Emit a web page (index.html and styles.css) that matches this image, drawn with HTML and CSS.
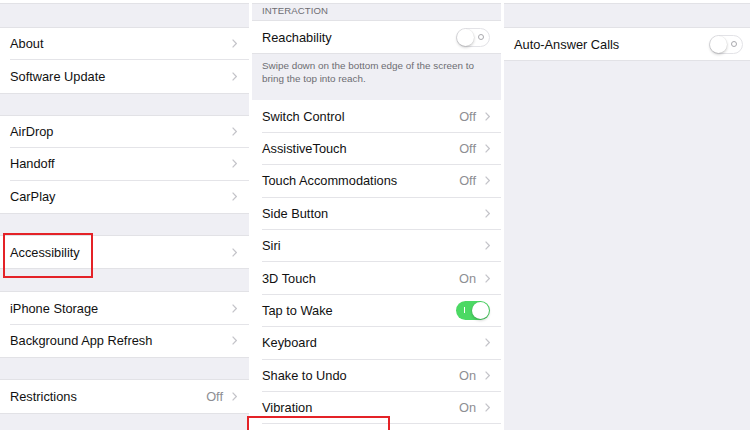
FILE: index.html
```html
<!DOCTYPE html>
<html>
<head>
<meta charset="utf-8">
<link rel="stylesheet" href="styles.css">
</head>
<body>
<div class="screen">
  <div class="col col1">
    <div class="strip"></div>
    <div class="group first">
      <div class="row"><div class="inner"><span class="label">About</span><span class="chev"><svg width="5" height="9" viewBox="0 0 5 9"><polyline points="0.6,0.6 4.3,4.5 0.6,8.4" fill="none" stroke="#c4c4c9" stroke-width="1.2"/></svg></span></div></div>
      <div class="row"><div class="inner"><span class="label">Software Update</span><span class="chev"><svg width="5" height="9" viewBox="0 0 5 9"><polyline points="0.6,0.6 4.3,4.5 0.6,8.4" fill="none" stroke="#c4c4c9" stroke-width="1.2"/></svg></span></div></div>
    </div>
    <div class="group">
      <div class="row"><div class="inner"><span class="label">AirDrop</span><span class="chev"><svg width="5" height="9" viewBox="0 0 5 9"><polyline points="0.6,0.6 4.3,4.5 0.6,8.4" fill="none" stroke="#c4c4c9" stroke-width="1.2"/></svg></span></div></div>
      <div class="row"><div class="inner"><span class="label">Handoff</span><span class="chev"><svg width="5" height="9" viewBox="0 0 5 9"><polyline points="0.6,0.6 4.3,4.5 0.6,8.4" fill="none" stroke="#c4c4c9" stroke-width="1.2"/></svg></span></div></div>
      <div class="row"><div class="inner"><span class="label">CarPlay</span><span class="chev"><svg width="5" height="9" viewBox="0 0 5 9"><polyline points="0.6,0.6 4.3,4.5 0.6,8.4" fill="none" stroke="#c4c4c9" stroke-width="1.2"/></svg></span></div></div>
    </div>
    <div class="group">
      <div class="row"><div class="inner"><span class="label">Accessibility</span><span class="chev"><svg width="5" height="9" viewBox="0 0 5 9"><polyline points="0.6,0.6 4.3,4.5 0.6,8.4" fill="none" stroke="#c4c4c9" stroke-width="1.2"/></svg></span></div></div>
    </div>
    <div class="group g24">
      <div class="row"><div class="inner"><span class="label">iPhone Storage</span><span class="chev"><svg width="5" height="9" viewBox="0 0 5 9"><polyline points="0.6,0.6 4.3,4.5 0.6,8.4" fill="none" stroke="#c4c4c9" stroke-width="1.2"/></svg></span></div></div>
      <div class="row"><div class="inner"><span class="label">Background App Refresh</span><span class="chev"><svg width="5" height="9" viewBox="0 0 5 9"><polyline points="0.6,0.6 4.3,4.5 0.6,8.4" fill="none" stroke="#c4c4c9" stroke-width="1.2"/></svg></span></div></div>
    </div>
    <div class="group">
      <div class="row"><div class="inner"><span class="label">Restrictions</span><span class="value">Off</span><span class="chev"><svg width="5" height="9" viewBox="0 0 5 9"><polyline points="0.6,0.6 4.3,4.5 0.6,8.4" fill="none" stroke="#c4c4c9" stroke-width="1.2"/></svg></span></div></div>
    </div>
  </div>

  <div class="col col2">
    <div class="strip"></div>
    <div class="header">INTERACTION</div>
    <div class="group flush">
      <div class="row"><div class="inner"><span class="label">Reachability</span><span class="toggle off"><span class="knob"></span><span class="ring"></span></span></div></div>
    </div>
    <div class="footer">Swipe down on the bottom edge of the screen to bring the top into reach.</div>
    <div class="group flush">
      <div class="row"><div class="inner"><span class="label">Switch Control</span><span class="value">Off</span><span class="chev"><svg width="5" height="9" viewBox="0 0 5 9"><polyline points="0.6,0.6 4.3,4.5 0.6,8.4" fill="none" stroke="#c4c4c9" stroke-width="1.2"/></svg></span></div></div>
      <div class="row"><div class="inner"><span class="label">AssistiveTouch</span><span class="value">Off</span><span class="chev"><svg width="5" height="9" viewBox="0 0 5 9"><polyline points="0.6,0.6 4.3,4.5 0.6,8.4" fill="none" stroke="#c4c4c9" stroke-width="1.2"/></svg></span></div></div>
      <div class="row"><div class="inner"><span class="label">Touch Accommodations</span><span class="value">Off</span><span class="chev"><svg width="5" height="9" viewBox="0 0 5 9"><polyline points="0.6,0.6 4.3,4.5 0.6,8.4" fill="none" stroke="#c4c4c9" stroke-width="1.2"/></svg></span></div></div>
      <div class="row"><div class="inner"><span class="label">Side Button</span><span class="chev"><svg width="5" height="9" viewBox="0 0 5 9"><polyline points="0.6,0.6 4.3,4.5 0.6,8.4" fill="none" stroke="#c4c4c9" stroke-width="1.2"/></svg></span></div></div>
      <div class="row"><div class="inner"><span class="label">Siri</span><span class="chev"><svg width="5" height="9" viewBox="0 0 5 9"><polyline points="0.6,0.6 4.3,4.5 0.6,8.4" fill="none" stroke="#c4c4c9" stroke-width="1.2"/></svg></span></div></div>
      <div class="row"><div class="inner"><span class="label">3D Touch</span><span class="value">On</span><span class="chev"><svg width="5" height="9" viewBox="0 0 5 9"><polyline points="0.6,0.6 4.3,4.5 0.6,8.4" fill="none" stroke="#c4c4c9" stroke-width="1.2"/></svg></span></div></div>
      <div class="row"><div class="inner"><span class="label">Tap to Wake</span><span class="toggle on"><span class="bar"></span><span class="knob"></span></span></div></div>
      <div class="row"><div class="inner"><span class="label">Keyboard</span><span class="chev"><svg width="5" height="9" viewBox="0 0 5 9"><polyline points="0.6,0.6 4.3,4.5 0.6,8.4" fill="none" stroke="#c4c4c9" stroke-width="1.2"/></svg></span></div></div>
      <div class="row"><div class="inner"><span class="label">Shake to Undo</span><span class="value">On</span><span class="chev"><svg width="5" height="9" viewBox="0 0 5 9"><polyline points="0.6,0.6 4.3,4.5 0.6,8.4" fill="none" stroke="#c4c4c9" stroke-width="1.2"/></svg></span></div></div>
      <div class="row"><div class="inner"><span class="label">Vibration</span><span class="value">On</span><span class="chev"><svg width="5" height="9" viewBox="0 0 5 9"><polyline points="0.6,0.6 4.3,4.5 0.6,8.4" fill="none" stroke="#c4c4c9" stroke-width="1.2"/></svg></span></div></div>
      <div class="row"><div class="inner"></div></div>
    </div>
  </div>

  <div class="col col3">
    <div class="strip"></div>
    <div class="group first">
      <div class="row"><div class="inner"><span class="label">Auto-Answer Calls</span><span class="toggle off"><span class="knob"></span><span class="ring"></span></span></div></div>
    </div>
  </div>

  <div class="mark mark-acc"></div>
  <div class="mark mark-call"></div>
</div>
</body>
</html>
```

FILE: styles.css
```css
html, body {
  margin: 0;
  padding: 0;
  background: #ffffff;
}

.screen {
  position: relative;
  width: 750px;
  height: 430px;
  overflow: hidden;
  display: flex;
  gap: 3px;
  background: #ffffff;
  font-family: "Liberation Sans", Arial, sans-serif;
  color: #111111;
}

.col {
  background: #efeff4;
  display: flex;
  flex-direction: column;
  overflow: hidden;
}

.col1 { width: 249px; }
.col2 { width: 249px; }
.col3 { flex: 1; }

.strip {
  height: 4px;
  flex: none;
  background: #ffffff;
  border-bottom: 1px solid #e2e2e6;
  box-sizing: border-box;
}

.group {
  flex: none;
  background: #ffffff;
  margin-top: 23px;
  box-shadow: 0 -1px 0 #e2e2e6, 0 1px 0 #e2e2e6;
}

.group.first { margin-top: 24px; }
.group.g24 { margin-top: 24px; }
.group.flush { margin-top: 0; box-shadow: 0 1px 0 #e2e2e6; }

.row {
  height: 32.4px;
  padding-left: 10px;
  box-sizing: border-box;
  display: flex;
}

.inner {
  flex: 1;
  display: flex;
  align-items: center;
  padding-right: 12px;
  box-sizing: border-box;
}

.row:not(:last-child) .inner {
  border-bottom: 1px solid #e4e4e8;
}

.col2 .inner { padding-right: 11px; }
.col3 .inner { padding-right: 7px; }

.label {
  flex: 1;
  font-size: 12.8px;
  white-space: nowrap;
}

.value {
  font-size: 12.8px;
  color: #8e8e93;
  margin-right: 9px;
}

.chev {
  display: flex;
  width: 5px;
  height: 9px;
}

.header {
  height: 17px;
  flex: none;
  padding-left: 10px;
  padding-top: 1px;
  box-sizing: border-box;
  font-size: 9.6px;
  color: #6d6d72;
  letter-spacing: 0.1px;
  border-bottom: 1px solid #e2e2e6;
}

.footer {
  height: 47px;
  flex: none;
  padding: 6px 16px 0 10px;
  box-sizing: border-box;
  font-size: 9.9px;
  line-height: 13px;
  color: #6d6d72;
}

.toggle {
  position: relative;
  width: 34px;
  height: 19px;
  border-radius: 10px;
  box-sizing: border-box;
  flex: none;
}

.toggle.off {
  background: #ffffff;
  border: 1px solid #e3e3e7;
}

.toggle.on {
  background: #4cd964;
}

.toggle .knob {
  position: absolute;
  top: 0;
  width: 17px;
  height: 17px;
  border-radius: 50%;
  background: #ffffff;
  box-shadow: 0 1.5px 3px rgba(0, 0, 0, 0.22), 0 0 0 0.5px rgba(0, 0, 0, 0.06);
}

.toggle.off .knob { left: 0; }
.toggle.on .knob { right: 1px; top: 1px; }

.toggle .ring {
  position: absolute;
  right: 5px;
  top: 5.5px;
  width: 6px;
  height: 6px;
  border: 1px solid #a9a9ae;
  border-radius: 50%;
  box-sizing: border-box;
}

.toggle .bar {
  position: absolute;
  left: 8px;
  top: 6.5px;
  width: 1px;
  height: 6px;
  background: #ffffff;
}

.mark {
  position: absolute;
  border: 2px solid #e42227;
  box-sizing: border-box;
}

.mark-acc {
  left: 3px;
  top: 233px;
  width: 90px;
  height: 45px;
}

.mark-call {
  left: 247px;
  top: 416px;
  width: 143px;
  height: 40px;
}
```
